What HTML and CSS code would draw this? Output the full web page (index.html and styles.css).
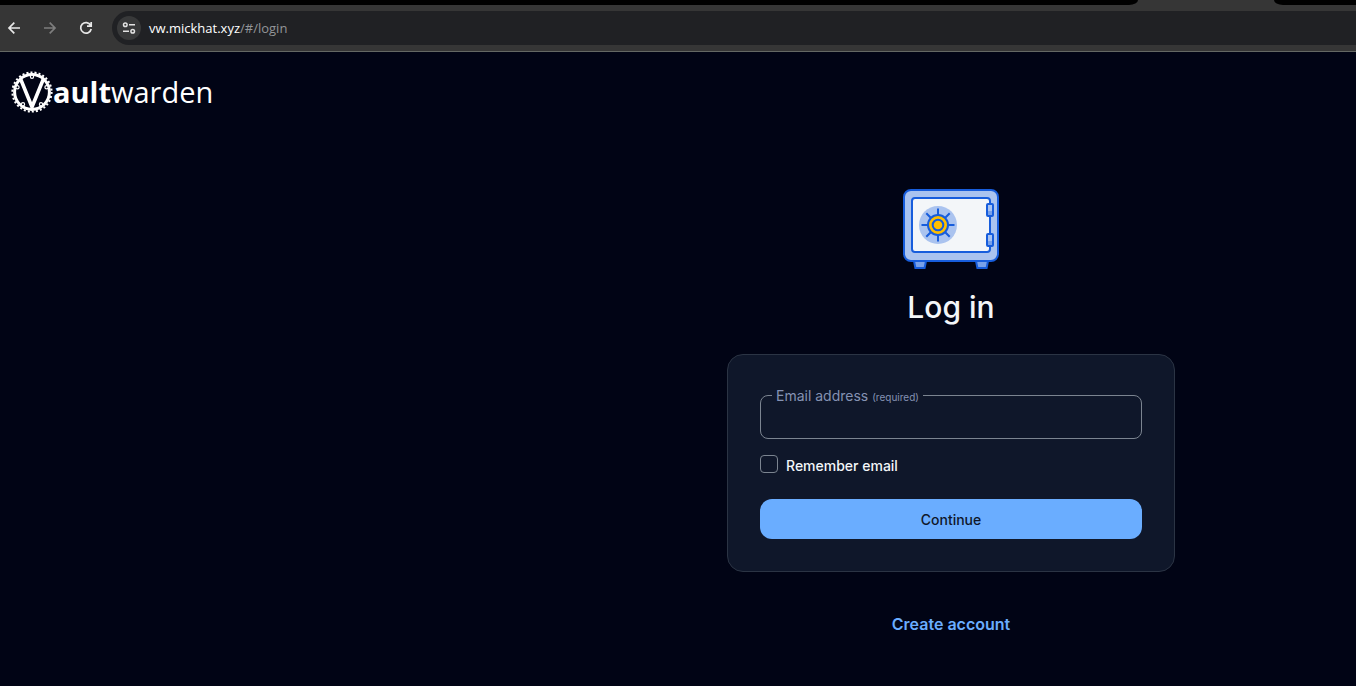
FILE: index.html
```html
<!DOCTYPE html>
<html lang="en">
<head>
<meta charset="utf-8">
<title>Vaultwarden Web</title>
<link rel="stylesheet" href="styles.css">
</head>
<body>
<div class="browser">
  <div class="tabs"><div class="tabs-before"></div><div class="tabs-after"></div></div>
  <nav class="toolbar" aria-label="Browser">
    <button class="nav-button" type="button" aria-label="Back">
      <svg width="16" height="16" viewBox="0 0 16 16" fill="none" stroke="#e8e8e8" stroke-width="1.7"><path d="M14 8H3M8.3 2.7 3 8 8.3 13.3"/></svg>
    </button>
    <button class="nav-button" type="button" aria-label="Forward">
      <svg width="16" height="16" viewBox="0 0 16 16" fill="none" stroke="#7e7e7e" stroke-width="1.7"><path d="M2 8h11M7.7 2.7 13 8 7.7 13.3"/></svg>
    </button>
    <button class="nav-button" type="button" aria-label="Reload">
      <svg width="16" height="16" viewBox="0 0 16 16" fill="none" stroke="#e8e8e8" stroke-width="1.7"><path d="M12.6 5.2A5.3 5.3 0 1 0 13.2 9M13.2 2v4.2H9"/></svg>
    </button>
    <div class="address">
      <button class="site-info" type="button" aria-label="Site information">
        <svg width="16" height="16" viewBox="0 0 16 16" fill="none" stroke="#e3e3e3" stroke-width="1.5"><circle cx="4.3" cy="4.7" r="1.8"/><path d="M8 4.7h6M2 11.3h6"/><circle cx="11.7" cy="11.3" r="1.8"/></svg>
      </button>
      <span class="url">vw.mickhat.xyz<span class="url-path">/#/login</span></span>
    </div>
  </nav>
</div>
<header class="header">
  <a class="logo" href="#/" aria-label="Vaultwarden">
    <svg width="42" height="42" viewBox="0 0 42 42" fill="none" stroke="#fff">
      <circle cx="21" cy="21" r="19.6" stroke-width="2" stroke-dasharray="2.05 2.05"/>
      <circle cx="21" cy="21" r="17.4" stroke-width="3"/>
      <path d="M9.8 8.5 21 36 32.2 8.5" stroke-width="3.6"/>
      <g stroke-width="1.2" fill="#010415">
        <circle cx="21" cy="5.8" r="1.6"/><circle cx="6.5" cy="16.3" r="1.6"/><circle cx="35.5" cy="16.3" r="1.6"/><circle cx="12" cy="33.3" r="1.6"/><circle cx="30" cy="33.3" r="1.6"/>
      </g>
    </svg>
    <span class="wordmark"><b>ault</b>warden</span>
  </a>
</header>
<main class="main">
  <svg class="safe" width="96" height="80" viewBox="0 0 96 80" stroke="#175ddc" stroke-width="2">
    <path d="M11 72h12l-1.4 7h-9.2zM73 72h12l-1.4 7h-9.2z" fill="#79a1e9"/>
    <rect x="1" y="1" width="94" height="71" rx="7" fill="#aac3ef"/>
    <rect x="9" y="9" width="78" height="54" rx="3" fill="#f3f6f9"/>
    <circle cx="35" cy="36" r="19" fill="#aac3ef" stroke="none"/>
    <path d="M35 19.5v33M18.5 36h33M23.3 24.3l23.4 23.4M46.7 24.3 23.3 47.7"/>
    <circle cx="35" cy="36" r="10" fill="#ffbf00"/>
    <circle cx="35" cy="36" r="5.3" fill="#ffbf00"/>
    <rect x="84" y="15" width="6" height="12" rx="1" fill="#aac3ef"/>
    <path d="M85 22h4v4h-4z" fill="#79a1e9" stroke="none"/>
    <rect x="84" y="45" width="6" height="12" rx="1" fill="#aac3ef"/>
    <path d="M85 52h4v4h-4z" fill="#79a1e9" stroke="none"/>
  </svg>
  <h1 class="title">Log in</h1>
  <form class="card">
    <div class="field">
      <label class="field-label" for="email">Email address <span class="required">(required)</span></label>
      <input class="field-input" id="email" type="email">
    </div>
    <div class="remember">
      <input class="checkbox" id="remember" type="checkbox">
      <label for="remember">Remember email</label>
    </div>
    <button class="submit" type="button">Continue</button>
  </form>
  <a class="create" href="#/signup">Create account</a>
</main>
</body>
</html>
```

FILE: styles.css
```css
* {
  box-sizing: border-box;
}

body {
  margin: 0;
  min-height: 100vh;
  background: #010415;
  color: #f3f6f9;
  font-family: Inter, "Liberation Sans", sans-serif;
}

button,
input {
  font: inherit;
}

.browser {
  background: #363636;
  border-bottom: 1px solid #646864;
}

.tabs {
  display: flex;
  justify-content: space-between;
  gap: 136px;
  height: 5px;
}

.tabs-before {
  flex: 1;
  background: #000;
  border-bottom-right-radius: 9px 5px;
}

.tabs-after {
  width: 82px;
  background: #000;
  border-bottom-left-radius: 9px 5px;
}

.toolbar {
  display: flex;
  align-items: center;
  gap: 20px;
  padding: 6px 0 6px 6px;
}

.nav-button {
  display: flex;
  padding: 0;
  border: 0;
  background: none;
}

.address {
  flex: 1;
  display: flex;
  align-items: center;
  gap: 8px;
  height: 34px;
  margin-left: -2px;
  padding-left: 5px;
  border-radius: 17px 0 0 17px;
  background: #202124;
}

.site-info {
  display: grid;
  place-items: center;
  width: 24px;
  height: 24px;
  padding: 0;
  border: 0;
  border-radius: 50%;
  background: #38393a;
}

.url {
  color: #fff;
  font-family: "Open Sans", "Noto Sans", sans-serif;
  font-size: 13px;
  line-height: 18px;
}

.url-path {
  color: #939598;
}

.header {
  display: flex;
  padding: 19px 11px 0;
}

.logo {
  display: flex;
  align-items: center;
  color: #fff;
  text-decoration: none;
}

.wordmark {
  font-family: "Open Sans", "Noto Sans", sans-serif;
  font-size: 29px;
  font-weight: 400;
  line-height: 42px;
}

.wordmark b {
  font-weight: 700;
}

.main {
  display: flex;
  flex-direction: column;
  align-items: center;
  padding: 76px 0 40px 546px;
}

.title {
  margin: 20px 0 29px;
  font-size: 30px;
  font-weight: 500;
  line-height: 36px;
}

.card {
  width: 100%;
  max-width: 448px;
  padding: 40px 32px 32px;
  border: 1px solid #2b3444;
  border-radius: 16px;
  background: #0f172a;
}

.field {
  position: relative;
}

.field-label {
  position: absolute;
  top: -9px;
  left: 12px;
  padding: 0 4px;
  background: #0f172a;
  color: #8592b3;
  font-size: 14px;
  line-height: 20px;
}

.required {
  font-size: 10px;
}

.field-input {
  display: block;
  width: 100%;
  height: 44px;
  padding: 0 16px;
  border: 1px solid #7b8490;
  border-radius: 8px;
  background: transparent;
  color: inherit;
}

.remember {
  display: flex;
  gap: 8px;
  padding: 16px 0 22px;
  font-size: 14px;
  font-weight: 500;
  line-height: 22px;
}

.checkbox {
  appearance: none;
  width: 18px;
  height: 18px;
  margin: 0;
  border: 1px solid #7b8490;
  border-radius: 4px;
}

.submit {
  width: 100%;
  height: 40px;
  border: 0;
  border-radius: 12px;
  background: #6aadff;
  color: #0f172a;
  font-size: 14px;
  font-weight: 500;
}

.create {
  margin-top: 40px;
  color: #6aadff;
  font-size: 16px;
  font-weight: 600;
  line-height: 24px;
  text-decoration: none;
}
```
